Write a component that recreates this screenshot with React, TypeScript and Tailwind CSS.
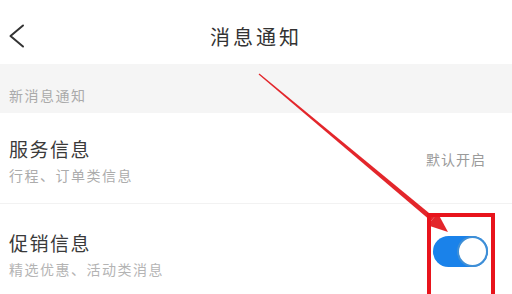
const cjk = "font-['Noto_Sans_CJK_SC','Noto_Sans',sans-serif]";

const BackIcon = () => (
  <svg className="absolute left-0 top-0" width="40" height="64" viewBox="0 0 40 64">
    <polyline points="23,25.5 10.5,36 23,46.5" fill="none" stroke="#333" strokeWidth="2" strokeLinecap="round" strokeLinejoin="round" />
  </svg>
);

const Toggle = () => (
  <div className="mt-[5px] mr-[15px] w-[55px] h-[31px] rounded-full bg-[#1a82ea] relative">
    <div className="absolute right-0 top-0 w-[31px] h-[31px] rounded-full bg-white border-2 border-[#3f8fd6]" />
  </div>
);

const App = () => {
  return (
    <div className={`relative w-[512px] h-[294px] overflow-hidden bg-white ${cjk}`}>
      {/* header */}
      <div className="relative h-[64px] flex items-center justify-center">
        <BackIcon />
        <span className="text-[20px] tracking-[3px] text-[#333] mt-[9px]">消息通知</span>
      </div>

      {/* section label */}
      <div className="h-[49px] bg-[#f5f5f5] flex items-center px-[9px]">
        <span className="text-[14px] tracking-[1.5px] text-[#aaa] mt-[14px]">新消息通知</span>
      </div>

      {/* service row */}
      <div className="h-[91px] flex items-center justify-between px-[9px] border-b border-[#f2f2f2]">
        <div className="flex flex-col pt-[7px]">
          <span className="text-[19px] leading-[26px] tracking-[1.5px] text-[#3a3a3a]">服务信息</span>
          <span className="text-[14px] leading-[26px] tracking-[1.5px] text-[#acacac]">行程、订单类信息</span>
        </div>
        <span className="mt-[3px] mr-[17px] text-[14px] tracking-[1px] text-[#9a9a9a]">默认开启</span>
      </div>

      {/* promo row */}
      <div className="h-[89px] flex items-center justify-between px-[9px]">
        <div className="flex flex-col pt-[14px]">
          <span className="text-[19px] leading-[26px] tracking-[1.5px] text-[#3a3a3a]">促销信息</span>
          <span className="text-[14px] leading-[26px] tracking-[1.5px] text-[#b4b4b4]">精选优惠、活动类消息</span>
        </div>
        <Toggle />
      </div>

      {/* annotation overlay */}
      <svg className="absolute inset-0 pointer-events-none" width="512" height="294" viewBox="0 0 512 294">
        <polygon points="259.4,73.5 258.6,74.5 431.0,221.1 434.2,217.3" fill="#e3262b" />
        <polygon points="448,232 427.5,225.3 437.7,213.1" fill="#e3262b" />
      </svg>
      <div className="absolute left-[427px] top-[213px] w-[68px] h-[90px] border-4 border-[#e8141c]" />
    </div>
  );
};

export default App;
